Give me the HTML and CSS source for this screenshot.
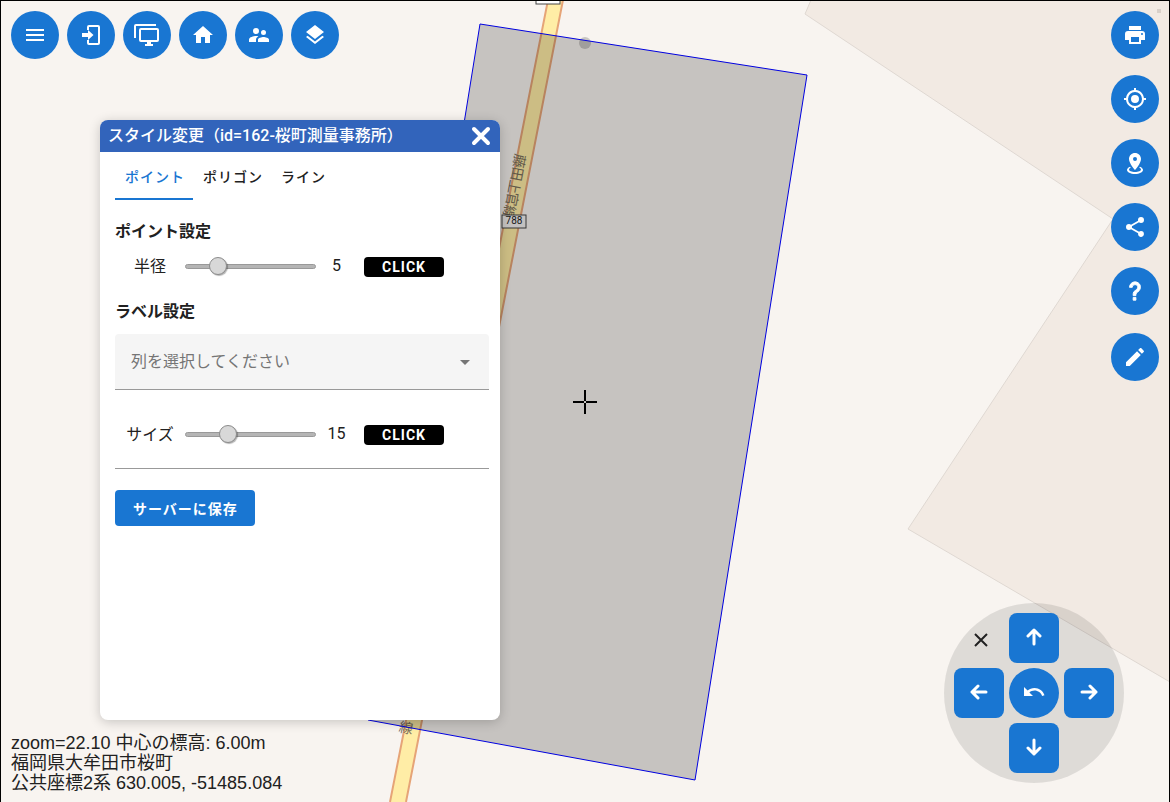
FILE: index.html
```html
<!DOCTYPE html>
<html lang="ja">
<head>
<meta charset="utf-8">
<meta name="viewport" content="width=device-width, initial-scale=1">
<title>スタイル変更</title>
<link rel="stylesheet" href="styles.css">
</head>
<body>
<main class="app">
  <svg class="map" viewBox="0 0 1170 802" preserveAspectRatio="xMidYMid slice" aria-hidden="true">
    <rect class="land" width="1170" height="802"/>
    <path class="building" d="M811 0 805 14 1113 219 908 529 1170 682V0Z"/>
    <path class="road" d="M548 0 390 802H406L563 0Z"/>
    <path class="road-edge" d="M548 0 390 802M563 0 406 802"/>
    <g class="road-name">
      <text transform="translate(519 161) rotate(101)">藤</text>
      <text transform="translate(517 174) rotate(101)">田</text>
      <text transform="translate(514 187) rotate(101)">上</text>
      <text transform="translate(512 199) rotate(101)">官</text>
      <text transform="translate(509 212) rotate(101)">線</text>
      <text transform="translate(406 728) rotate(11)">線</text>
    </g>
    <rect class="route" x="536" y="-9" width="24" height="13"/>
    <rect class="route parcel-tint" x="502" y="215" width="24" height="13"/>
    <text class="route-no" x="514" y="224">788</text>
    <circle class="point" cx="585" cy="43" r="6"/>
    <path class="parcel" d="M480 24 807 75 695 780 368 720Z"/>
    <rect class="mark" x="1157" y="9" width="4" height="4"/>
    <path class="cross" d="M573 402H584M586 402H597M585 390V401M585 403V414"/>
  </svg>

  <nav class="toolbar" aria-label="メニュー">
    <button class="round" aria-label="メニュー"><svg class="menu" viewBox="0 0 24 24"><path d="M3 6H21V8H3V6M3 11H21V13H3V11M3 16H21V18H3V16Z"/></svg></button>
    <button class="round" aria-label="ログイン"><svg viewBox="0 0 24 24"><path d="M19 2H10a2 2 0 0 0-2 2v3h2V4h9v16h-9v-3H8v3a2 2 0 0 0 2 2h9a2 2 0 0 0 2-2V4a2 2 0 0 0-2-2M3 10V14H9V17L14.500 12 9 7V10Z"/></svg></button>
    <button class="round" aria-label="画面"><svg class="wide" viewBox="0 0 26 24"><path fill-rule="evenodd" d="M0 15V3A2 2 0 0 1 2 1H22V3H2V15ZM7 5H23A2 2 0 0 1 25 7V17A2 2 0 0 1 23 19H17V21H19V23H11V21H13V19H7A2 2 0 0 1 5 17V7A2 2 0 0 1 7 5ZM7 7V17H23V7Z"/></svg></button>
    <button class="round" aria-label="ホーム"><svg viewBox="0 0 24 24"><path d="M10 20V14H14V20H19V12H22L12 3 2 12H5V20H10Z"/></svg></button>
    <button class="round" aria-label="ユーザー"><svg viewBox="0 0 24 24"><path d="M16.500 12A2.500 2.500 0 0 0 19 9.500 2.500 2.500 0 0 0 16.500 7 2.500 2.500 0 0 0 14 9.500 2.500 2.500 0 0 0 16.500 12M9 11A3 3 0 0 0 12 8 3 3 0 0 0 9 5 3 3 0 0 0 6 8 3 3 0 0 0 9 11M16.500 14C14.670 14 11 14.920 11 16.750V19H22V16.750C22 14.920 18.330 14 16.500 14M9 13C6.670 13 2 14.170 2 16.500V19H9V16.750C9 15.900 9.330 14.410 11.370 13.280 10.500 13.100 9.660 13 9 13Z"/></svg></button>
    <button class="round" aria-label="レイヤー"><svg viewBox="0 0 24 24"><path d="M12 16 19.360 10.270 21 9 12 2 3 9 4.630 10.270M12 18.540 4.620 12.810 3 14.070 12 21.070 21 14.070 19.370 12.800 12 18.540Z"/></svg></button>
  </nav>

  <nav class="tools" aria-label="ツール">
    <button class="round" aria-label="印刷"><svg viewBox="0 0 24 24"><path d="M18 3H6V7H18M19 12A1 1 0 0 1 18 11 1 1 0 0 1 19 10 1 1 0 0 1 20 11 1 1 0 0 1 19 12M16 19H8V14H16M19 8H5A3 3 0 0 0 2 11V17H6V21H18V17H22V11A3 3 0 0 0 19 8Z"/></svg></button>
    <button class="round" aria-label="現在地"><svg viewBox="0 0 24 24"><path d="M12 8A4 4 0 0 1 16 12 4 4 0 0 1 12 16 4 4 0 0 1 8 12 4 4 0 0 1 12 8M3.050 13H1V11H3.050C3.500 6.830 6.830 3.500 11 3.050V1H13V3.050C17.170 3.500 20.500 6.830 20.950 11H23V13H20.950C20.500 17.170 17.170 20.500 13 20.950V23H11V20.950C6.830 20.500 3.500 17.170 3.050 13M12 5A7 7 0 0 0 5 12 7 7 0 0 0 12 19 7 7 0 0 0 19 12 7 7 0 0 0 12 5Z"/></svg></button>
    <button class="round" aria-label="地点"><svg viewBox="0 0 24 24"><path d="M12 2C15.310 2 18 4.660 18 7.950 18 12.410 12 19 12 19S6 12.410 6 7.950C6 4.660 8.690 2 12 2M12 6A2 2 0 0 0 10 8 2 2 0 0 0 12 10 2 2 0 0 0 14 8 2 2 0 0 0 12 6M20 19C20 21.210 16.420 23 12 23S4 21.210 4 19C4 17.710 5.220 16.560 7.110 15.830L7.750 16.740C6.670 17.190 6 17.810 6 18.500 6 19.880 8.690 21 12 21S18 19.880 18 18.500C18 17.810 17.330 17.190 16.250 16.740L16.890 15.830C18.780 16.560 20 17.710 20 19Z"/></svg></button>
    <button class="round" aria-label="共有"><svg viewBox="0 0 24 24"><path d="M18 16.080C17.240 16.080 16.560 16.380 16.040 16.850L8.910 12.700C8.960 12.470 9 12.240 9 12S8.960 11.530 8.910 11.300L15.960 7.190C16.500 7.690 17.210 8 18 8A3 3 0 0 0 21 5 3 3 0 0 0 18 2 3 3 0 0 0 15 5C15 5.240 15.040 5.470 15.090 5.700L8.040 9.810C7.500 9.310 6.790 9 6 9A3 3 0 0 0 3 12 3 3 0 0 0 6 15C6.790 15 7.500 14.690 8.040 14.190L15.160 18.340C15.110 18.550 15.080 18.770 15.080 19 15.080 20.610 16.390 21.910 18 21.910S20.920 20.610 20.920 19A2.920 2.920 0 0 0 18 16.080Z"/></svg></button>
    <button class="round" aria-label="ヘルプ"><svg class="help" viewBox="0 0 24 24"><path d="M10 19H13V22H10V19M12 2C17.350 2.220 19.680 7.620 16.500 11.670 15.670 12.670 14.330 13.330 13.670 14.170 13 15 13 16 13 17H10C10 15.330 10 13.920 10.670 12.920 11.330 11.920 12.670 11.330 13.500 10.670 15.920 8.430 15.320 5.260 12 5A3 3 0 0 0 9 8H6A6 6 0 0 1 12 2Z"/></svg></button>
    <button class="round edit" aria-label="編集"><svg viewBox="0 0 24 24"><path d="M20.710 7.040C21.100 6.650 21.100 6 20.710 5.630L18.370 3.290C18 2.900 17.350 2.900 16.960 3.290L15.120 5.120 18.870 8.870M3 17.250V21H6.750L17.810 9.930 14.060 6.180 3 17.250Z"/></svg></button>
  </nav>

  <section class="dialog" aria-labelledby="dialog-title">
    <header class="dialog-head">
      <h1 id="dialog-title">スタイル変更（id=162-桜町測量事務所）</h1>
      <button class="close" aria-label="閉じる"><svg viewBox="0 0 20 20"><path d="M3 3 17 17M17 3 3 17"/></svg></button>
    </header>
    <div class="dialog-body">
      <div class="tabs" role="tablist">
        <button class="tab active" role="tab" aria-selected="true">ポイント</button>
        <button class="tab" role="tab" aria-selected="false">ポリゴン</button>
        <button class="tab" role="tab" aria-selected="false">ライン</button>
      </div>
      <h2>ポイント設定</h2>
      <div class="setting">
        <label for="radius">半径</label>
        <input id="radius" type="range" min="0" max="24" value="5">
        <output for="radius">5</output>
        <button class="click">CLICK</button>
      </div>
      <h2 class="label-heading">ラベル設定</h2>
      <div class="select-wrap">
        <select aria-label="列を選択してください"><option>列を選択してください</option></select>
        <svg viewBox="0 0 10 5" aria-hidden="true"><path d="M0 0H10L5 5Z"/></svg>
      </div>
      <div class="setting size">
        <label for="size">サイズ</label>
        <input id="size" type="range" min="0" max="51" value="15">
        <output for="size">15</output>
        <button class="click">CLICK</button>
      </div>
      <hr>
      <button class="save">サーバーに保存</button>
    </div>
  </section>

  <p class="status">zoom=22.10 中心の標高: 6.00m<br>福岡県大牟田市桜町<br>公共座標2系 630.005, -51485.084</p>

  <div class="pad">
    <button class="pad-close" aria-label="閉じる"><svg viewBox="0 0 14 14"><path d="M1 1 13 13M13 1 1 13"/></svg></button>
    <button class="move up" aria-label="上"><svg viewBox="0 0 18 18"><path d="M9 16V2M3 8 9 2 15 8"/></svg></button>
    <button class="move left" aria-label="左"><svg viewBox="0 0 18 18"><path d="M16 9H2M8 3 2 9 8 15"/></svg></button>
    <button class="move undo" aria-label="元に戻す"><svg viewBox="0 0 24 24"><path d="M12.500 8C9.850 8 7.450 9 5.600 10.600L2 7V16H11L7.380 12.380C8.770 11.220 10.540 10.500 12.500 10.500 16.040 10.500 19.050 12.810 20.100 16L22.470 15.220C21.080 11.030 17.150 8 12.500 8Z"/></svg></button>
    <button class="move right" aria-label="右"><svg viewBox="0 0 18 18"><path d="M2 9H16M10 3 16 9 10 15"/></svg></button>
    <button class="move down" aria-label="下"><svg viewBox="0 0 18 18"><path d="M9 2V16M3 10 9 16 15 10"/></svg></button>
  </div>
</main>
</body>
</html>
```

FILE: styles.css
```css
* { box-sizing: border-box; }
body {
  margin: 0;
  color: #212121;
  font-family: Roboto, "Noto Sans CJK JP", sans-serif;
  font-size: 16px;
}
button { border: 0; padding: 0; font: inherit; color: inherit; background: none; cursor: pointer; }
svg { display: block; fill: currentColor; }

.app {
  position: relative;
  height: 100vh;
  overflow: hidden;
  border: 1px solid #000;
  border-bottom: 0;
}

/* Map canvas */
.map { position: absolute; inset: -1px; width: calc(100% + 2px); height: calc(100% + 1px); z-index: -1; }
.land { fill: #f8f4f0; }
.building { fill: #f2eae3; stroke: #dfd8d2; }
.road { fill: #ffeda6; }
.road-edge { fill: none; stroke: #e6a477; stroke-width: 2; }
.road-name { font-size: 14px; text-anchor: middle; dominant-baseline: central; fill: #7a705c; }
.route { fill: #fff; stroke: #444; }
.parcel-tint { fill: #f4f2f0; }
.route-no { font-size: 10px; text-anchor: middle; fill: #222; }
.point { fill: #c9c6c3; }
.parcel { fill: rgba(0, 0, 0, 0.2); stroke: #0000e0; }
.mark { fill: #d9d0c9; }
.cross { stroke: #000; stroke-width: 2; }

/* Round tool buttons */
.toolbar { position: absolute; top: 10px; left: 10px; display: flex; gap: 8px; }
.tools { position: absolute; top: 10px; right: 10px; display: flex; flex-direction: column; gap: 16px; }
.round {
  display: grid;
  place-items: center;
  width: 48px;
  height: 48px;
  border-radius: 50%;
  color: #fff;
  background: #1976d2;
}
.round svg { width: 24px; height: 24px; }
.round .wide { width: 26px; }
.round .help { stroke: currentColor; stroke-width: 1; width: 22px; height: 22px; }
.edit { margin-top: 2px; }

/* Style dialog */
.dialog {
  position: absolute;
  top: 119px;
  left: 99px;
  width: 400px;
  height: 600px;
  overflow: hidden;
  border-radius: 8px;
  background: #fff;
  box-shadow: 0 2px 12px rgba(0, 0, 0, 0.2);
}
.dialog-head {
  display: flex;
  align-items: center;
  justify-content: space-between;
  height: 32px;
  padding: 0 9px 0 8px;
  color: #fff;
  background: #3264bb;
}
.dialog-head h1 { margin: 0; font-size: 16px; font-weight: 500; line-height: 24px; }
.close svg { width: 20px; height: 20px; fill: none; stroke: currentColor; stroke-width: 4; stroke-linecap: round; }
.dialog-body { padding: 0 11px 0 15px; }
.tabs { display: flex; height: 48px; }
.tab {
  padding: 2px 8px 0 10px;
  border-bottom: 2px solid transparent;
  font-size: 14px;
  font-weight: 500;
  letter-spacing: 1px;
}
.tab.active { color: #1976d2; border-color: #1976d2; }
h2 { margin: 20px 0 0; font-size: 16px; line-height: 24px; }
.setting {
  display: grid;
  grid-template-columns: 70px 131px 41px 80px;
  align-items: center;
  height: 24px;
  margin-top: 9px;
}
.setting label, .setting output { padding-bottom: 2px; text-align: center; }
input[type="range"] { appearance: none; width: 100%; height: 20px; margin: 0; background: none; }
input[type="range"]::-webkit-slider-runnable-track {
  height: 5px;
  border: 1px solid #999;
  border-radius: 3px;
  background: #b5b5b5;
}
input[type="range"]::-webkit-slider-thumb {
  appearance: none;
  width: 18px;
  height: 18px;
  margin-top: -8px;
  border: 1px solid #8c8c8c;
  border-radius: 50%;
  background: #d8d8d8;
  box-shadow: 1px 1px 1px rgba(0, 0, 0, 0.3);
}
.click {
  height: 20px;
  margin: 2px 0 0 7px;
  width: 80px;
  border-radius: 4px;
  color: #fff;
  background: #000;
  font-size: 14px;
  font-weight: 700;
  line-height: 20px;
  letter-spacing: 1px;
}
.label-heading { margin-top: 23px; }
.select-wrap { position: relative; margin-top: 10px; }
.select-wrap select {
  appearance: none;
  width: 100%;
  height: 56px;
  padding: 0 16px;
  border: 0;
  border-bottom: 1px solid #999;
  border-radius: 4px 4px 0 0;
  color: #757575;
  background: #f5f5f5;
  font: inherit;
}
.select-wrap svg { position: absolute; top: 26px; right: 19px; width: 10px; height: 5px; color: #757575; }
.setting.size { margin-top: 31px; }
hr { margin: 23px 0 0; border: 0; border-bottom: 1px solid #999; }
.save {
  height: 36px;
  margin-top: 21px;
  padding: 0 17px 0 18px;
  border-radius: 4px;
  color: #fff;
  background: #1976d2;
  font-size: 14px;
  font-weight: 700;
  letter-spacing: 1px;
}

/* Location read-out */
.status {
  position: absolute;
  left: 10px;
  bottom: 9px;
  margin: 0;
  font-family: "Liberation Sans", "Noto Sans CJK JP", sans-serif;
  font-size: 18px;
  line-height: 20px;
}

/* Direction pad */
.pad {
  position: absolute;
  right: 45px;
  bottom: 19px;
  display: grid;
  grid-template-areas: "close up ." "left undo right" ". down .";
  grid-template-columns: repeat(3, 50px);
  grid-template-rows: repeat(3, 50px);
  gap: 5px;
  padding: 10px;
  border-radius: 50%;
  background: rgba(0, 0, 0, 0.1);
}
.move { display: grid; place-items: center; padding-bottom: 2px; border-radius: 8px; color: #fff; background: #1976d2; }
.move svg { width: 18px; height: 18px; fill: none; stroke: currentColor; stroke-width: 3; stroke-linecap: round; stroke-linejoin: round; }
.up { grid-area: up; }
.left { grid-area: left; }
.undo { grid-area: undo; border-radius: 50%; }
.undo svg { width: 24px; height: 24px; fill: currentColor; stroke: none; }
.right { grid-area: right; }
.down { grid-area: down; }
.pad-close { grid-area: close; display: grid; place-items: center; padding: 4px 0 0 4px; }
.pad-close svg { width: 14px; height: 14px; fill: none; stroke: currentColor; stroke-width: 2; }
```
